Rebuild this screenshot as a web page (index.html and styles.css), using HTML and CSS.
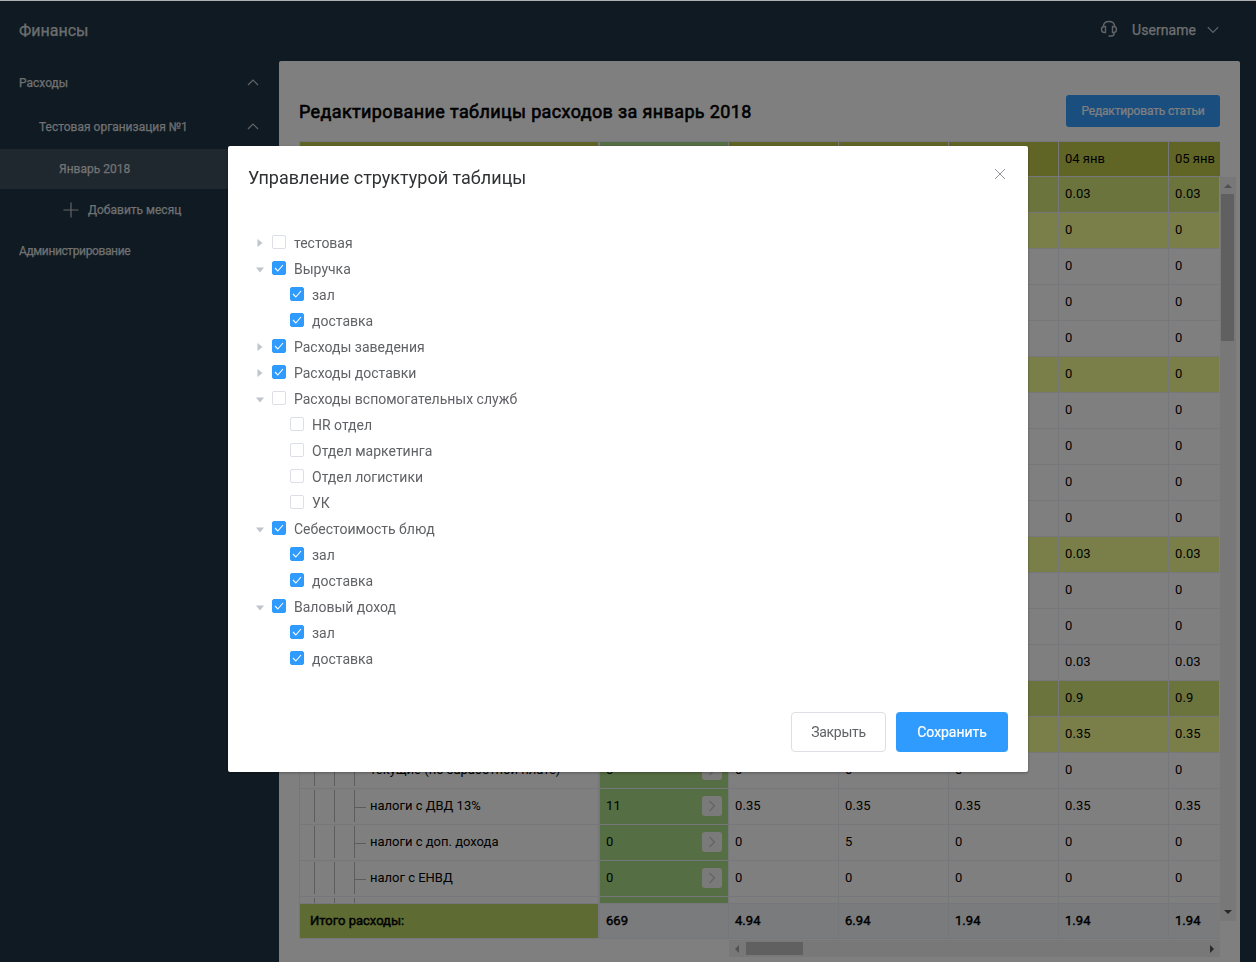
FILE: index.html
```html
<!DOCTYPE html>
<html lang="ru">
<head>
<meta charset="utf-8">
<title>Финансы</title>
<link rel="stylesheet" href="styles.css">
</head>
<body>
<div class="app">
  <header class="topbar">
    <div class="brand">Финансы</div>
    <div class="user">
      <svg class="headset" width="18" height="18" viewBox="0 0 18 18"><path d="M3.200 6.500C3.500 3.200 6 1.500 9 1.500s5.500 1.700 5.800 5M5.500 6.500h-1C2.500 6.500 1.500 8 1.500 9.500s1 3 3 3h1zM12.500 6.500h1c2 0 3 1.500 3 3s-1 3-3 3h-1zM14.300 12.700c0 2.200-1 3.300-3 3.300H8.500"/></svg>
      <span class="username">Username</span>
      <svg class="chev" width="12" height="8" viewBox="0 0 12 8"><path d="M.8 1.200 6 6.500l5.200-5.300"/></svg>
    </div>
  </header>
  <div class="columns">
    <nav class="side">
      <div class="item top"><span>Расходы</span><svg class="chev" width="12" height="7" viewBox="0 0 12 7"><path d="M1 6 6 1l5 5"/></svg></div>
      <div class="item org"><span>Тестовая организация №1</span><svg class="chev" width="12" height="7" viewBox="0 0 12 7"><path d="M1 6 6 1l5 5"/></svg></div>
      <div class="item month"><span>Январь 2018</span></div>
      <div class="item add"><svg class="plus" width="16" height="16" viewBox="0 0 16 16"><path d="M8 .5v15M.5 8h15"/></svg><span>Добавить месяц</span></div>
      <div class="item admin"><span>Администрирование</span></div>
    </nav>
    <main class="panel">
      <div class="panel-head">
        <h1 class="title"><span>Редактирование таблицы расходов за январь 2018</span></h1>
        <button class="edit"><span>Редактировать статьи</span></button>
      </div>
      <div class="sheet">
        <div class="table">
          <div class="row head"><div class="c name"></div><div class="c sum"></div><div class="c"></div><div class="c"></div><div class="c"></div><div class="c">04 янв</div><div class="c">05 янв</div></div>
          <div class="body" id="rows"></div>
          <div class="row total"><div class="c name">Итого расходы:</div><div class="c sum">669</div><div class="c">4.94</div><div class="c">6.94</div><div class="c">1.94</div><div class="c">1.94</div><div class="c">1.94</div></div>
          <div class="hbar"><i class="tri left"></i><i class="hthumb"></i><i class="tri right"></i></div>
        </div>
        <div class="vbar"><i class="tri up"></i><i class="vthumb"></i><i class="tri down"></i></div>
      </div>
    </main>
  </div>
</div>
<div class="overlay">
  <section class="modal">
    <div class="modal-head"><h2 class="modal-title"><span>Управление структурой таблицы</span></h2><svg class="close" width="12" height="12" viewBox="0 0 12 12"><path d="m1 1 10 10M11 1 1 11"/></svg></div>
    <ul class="tree" id="tree"></ul>
    <div class="actions"><button class="btn plain">Закрыть</button><button class="btn primary">Сохранить</button></div>
  </section>
</div>
<script src="app.js"></script>
</body>
</html>
```
FILE: styles.css
```css
* { box-sizing: border-box; }
body { margin: 0; font-family: Roboto, "Liberation Sans", sans-serif; font-size: 13px; color: #000; overflow: hidden; }
svg { fill: none; flex: none; }
button { font-family: inherit; margin: 0; padding: 0; }
.app { height: 962px; background: #203545; display: flex; flex-direction: column; overflow: hidden; }
.topbar { height: 61px; flex: none; display: flex; justify-content: space-between; align-items: center; padding: 0 37px 0 19px; color: #fffc; -webkit-text-stroke: .25px #fffc; }
.brand { font-size: 16px; }
.user { display: flex; align-items: center; font-size: 14px; }
.username { margin: -2px 11px 0 14px; letter-spacing: .05px; }
.headset, .chev, .plus { stroke: #fffb; stroke-width: 1.2; }
.headset { margin-top: -3px; stroke-width: 1.4; }
.user .chev { margin-top: -1px; }
.columns { flex: 1; min-height: 0; display: grid; grid-template-columns: 279px 961px; }
.side { color: #fffc; font-size: 12px; -webkit-text-stroke: .25px #fffc; }
.item { display: flex; align-items: center; justify-content: space-between; padding-right: 20px; }
.item .chev { margin-top: -1px; }
.top { height: 44px; padding-left: 19px; }
.org { height: 44px; padding-left: 39px; }
.month { height: 40px; padding-left: 59px; background: #3f505d; }
.add { height: 42px; padding-left: 63px; justify-content: flex-start; gap: 9px; }
.admin { height: 40px; padding-left: 19px; letter-spacing: -.38px; }
.panel { background: #fff; border-radius: 2px 2px 0 0; padding: 34px 4px 0 20px; }
.panel-head { height: 46px; display: flex; justify-content: space-between; align-items: flex-start; padding-right: 16px; }
.title { margin: 6px 0 0; font-size: 18px; line-height: 22px; font-weight: 400; -webkit-text-stroke: .6px #000; letter-spacing: .37px; white-space: nowrap; }
.edit { width: 154px; height: 32px; border: 0; border-radius: 3px; background: #339dff; color: #fff; font-size: 12px; font-weight: 400; letter-spacing: -.17px; -webkit-text-stroke: .2px #fff; }
.sheet { display: flex; width: 937px; }
.table { width: 921px; overflow: hidden; flex: none; }
.row { display: grid; grid-template-columns: 300px 130px repeat(5, 110px); width: 980px; height: 36px; }
.c { border-right: 1px solid #ebeef5; border-bottom: 1px solid #ebeef5; padding-left: 6px; display: flex; align-items: center; padding-bottom: 2px; letter-spacing: .08px; }
.name { border-left: 1px solid #ebeef5; padding-left: 10px; letter-spacing: 0; }
.sum { border-left: 1px solid #ebeef5; background: #acdc86; }
.head { border-top: 1px solid #ebeef5; background: #c0ca4c; }
.head .c { padding-bottom: 1px; letter-spacing: 0; }
.body { height: 726px; overflow: hidden; width: 920px; }
.dark { background: #d8e87c; }
.light { background: #f4ff94; }
.guides { display: flex; align-self: stretch; margin: 1px 4px 0 4px; }
.guides i { width: 20px; border-left: 1px solid #bbb; }
.guides i:last-child { width: 12px; background: linear-gradient(#bbb, #bbb) 0 17px / 11px 1px no-repeat; }
.go { width: 20px; height: 20px; margin: 1px 6px 0 auto; border-radius: 3px; background: #f5f5f7; display: flex; align-items: center; justify-content: center; }
.go svg { stroke: #c0c4cc; stroke-width: 1.2; }
.total { -webkit-text-stroke: .45px #000; border-top: 1px solid #ebeef5; }
.total .c { background: #f5f7fa; letter-spacing: .05px; }
.total .c.name { background: #bcd866; letter-spacing: 0; }
.hbar { margin: 1px 0 0 430px; width: 491px; height: 17px; background: #f1f1f1; display: flex; align-items: center; justify-content: space-between; padding: 0 6px 0 6px; }
.hthumb { width: 57px; height: 13px; background: #c1c1c1; margin-right: auto; margin-left: 7px; }
.vbar { width: 16px; height: 744px; margin-top: 36px; background: #f1f1f1; display: flex; flex-direction: column; align-items: center; padding: 7px 1px 7px 0; }
.vthumb { width: 13px; height: 147px; background: #c1c1c1; margin: 6px 0 auto; }
.tri { border: 4px solid transparent; flex: none; }
.up { border-top: 0; border-bottom-color: #a3a3a3; }
.down { border-bottom: 0; border-top-color: #505050; }
.left { border-left: 0; border-right-color: #a3a3a3; }
.right { border-right: 0; border-left-color: #505050; }
.overlay { position: fixed; inset: 0; background: rgba(0,0,0,.5); border-top: 1px solid #b0b0b0; padding: 145px 0 0 228px; }
.modal { width: 800px; height: 626px; background: #fff; border-radius: 2px; box-shadow: 0 1px 3px rgba(0,0,0,.3); padding: 20px; display: flex; flex-direction: column; }
.modal-head { display: flex; justify-content: space-between; height: 64px; padding-right: 2px; }
.modal-title { margin: 0; font-size: 18px; font-weight: 400; line-height: 24px; color: #303133; }
.close { stroke: #909399; margin-top: 2px; }
.tree { list-style: none; margin: 0; padding: 0; color: #606266; font-size: 14px; }
.node { height: 26px; display: flex; align-items: center; padding-left: 7px; }
.child { padding-left: 25px; }
.caret { width: 11px; margin-right: 6px; display: flex; justify-content: center; }
.caret svg { fill: #c0c4cc; margin: -1px 1px 0 0; }
.box { width: 14px; height: 14px; border: 1px solid #dcdfe6; border-radius: 2px; margin: -2px 8px 0 0; display: flex; }
.box svg { stroke: #fff; stroke-width: 1.1; }
.on { background: #309bff; border-color: #309bff; }
.actions { margin-top: auto; display: flex; justify-content: flex-end; gap: 10px; }
.btn { height: 40px; border-radius: 4px; font-size: 14px; font-weight: 400; }
.plain { width: 95px; background: #fff; border: 1px solid #dcdfe6; color: #606266; letter-spacing: -.3px; }
.primary { width: 112px; background: #309bff; border: 0; color: #fff; -webkit-text-stroke: .2px #fff; letter-spacing: -.05px; }
```
FILE: app.js
```javascript
// Each row: tint, label, sum, then the daily values.
const e = '';
const day = (tint, v) => [tint, e, e, e, e, e, v, v];
const rows = [
  day('dark', '0.03'), day('light', '0'), day(e, '0'), day(e, '0'), day(e, '0'),
  day('light', '0'), day(e, '0'), day(e, '0'), day(e, '0'), day(e, '0'),
  day('light', '0.03'), day(e, '0'), day(e, '0'), day(e, '0.03'),
  day('dark', '0.9'), day('light', '0.35'),
  [e, 'текущие (по заработной плате)', '0', '0', '0', '0', '0', '0'],
  [e, 'налоги с ДВД 13%', '11', '0.35', '0.35', '0.35', '0.35', '0.35'],
  [e, 'налоги с доп. дохода', '0', '0', '5', '0', '0', '0'],
  [e, 'налог с ЕНВД', '0', '0', '0', '0', '0', '0'],
  [e, ' ', e, e, e, e, e, e]
];
const guides = '<span class="guides"><i></i><i></i><i></i></span>';
const go = '<span class="go"><svg width="8" height="12" viewBox="0 0 8 12"><path d="m1.500 1 5 5-5 5"/></svg></span>';
document.getElementById('rows').innerHTML = rows.map(([tint, label, sum, ...days]) =>
  `<div class="row ${tint}"><div class="c name">${label ? guides + label : ''}</div>` +
  `<div class="c sum">${sum}${sum ? go : ''}</div>` +
  days.map(v => `<div class="c">${v}</div>`).join('') + '</div>').join('');

// Each node: state of the caret ('>' closed, 'v' open, '' for a leaf), checked, label.
const nodes = [
  ['>', 0, 'тестовая'], ['v', 1, 'Выручка'], ['', 1, 'зал'], ['', 1, 'доставка'],
  ['>', 1, 'Расходы заведения'], ['>', 1, 'Расходы доставки'],
  ['v', 0, 'Расходы вспомогательных служб'], ['', 0, 'HR отдел'], ['', 0, 'Отдел маркетинга'],
  ['', 0, 'Отдел логистики'], ['', 0, 'УК'],
  ['v', 1, 'Себестоимость блюд'], ['', 1, 'зал'], ['', 1, 'доставка'],
  ['v', 1, 'Валовый доход'], ['', 1, 'зал'], ['', 1, 'доставка']
];
const shapes = {
  '>': '<svg width="8" height="8" viewBox="0 0 8 8"><path d="M1.500 0v8l5-4z"/></svg>',
  'v': '<svg width="8" height="8" viewBox="0 0 8 8"><path d="M0 2.500h8l-4 5z"/></svg>',
  '': ''
};
const tick = '<svg width="12" height="12" viewBox="0 0 12 12"><path d="m2 6 2.800 3L10 3"/></svg>';
document.getElementById('tree').innerHTML = nodes.map(([caret, on, label]) =>
  `<li class="node${caret ? '' : ' child'}"><span class="caret">${shapes[caret]}</span>` +
  `<span class="box${on ? ' on' : ''}">${on ? tick : ''}</span><span>${label}</span></li>`).join('');
```
